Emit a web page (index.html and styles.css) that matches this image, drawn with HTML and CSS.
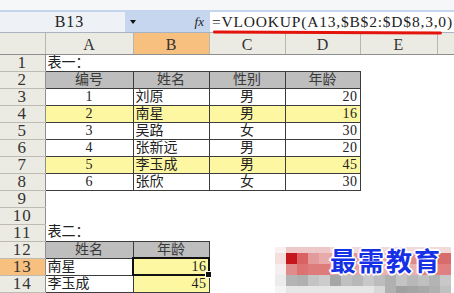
FILE: index.html
```html
<!doctype html>
<html lang="zh">
<head>
	<meta charset="utf-8">
	<title>VLOOKUP</title>
	<link rel="stylesheet" href="styles.css">
</head>
<body>

	<div class="top"></div>

	<div class="fbar">
		<div class="namebox">B13</div>
		<div class="fxarea"><span class="arrow"></span><span class="fx">fx</span></div>
		<div class="formula">=VLOOKUP(A13,$B$2:$D$8,3,0)</div>
	</div>

	<table class="sheet">
		<colgroup>
			<col class="w-rh"><col class="w-a"><col class="w-b"><col class="w-c"><col class="w-d"><col class="w-e"><col class="w-f">
		</colgroup>
		<thead>
			<tr><th></th><th>A</th><th class="sel">B</th><th>C</th><th>D</th><th>E</th><th></th></tr>
		</thead>
		<tbody>
			<tr><th>1</th><td>表一：</td><td></td><td></td><td></td><td></td><td></td></tr>
			<tr><th>2</th><td class="b hd c">编号</td><td class="b hd c">姓名</td><td class="b hd c">性别</td><td class="b hd c">年龄</td><td></td><td></td></tr>
			<tr><th>3</th><td class="b c">1</td><td class="b">刘原</td><td class="b c">男</td><td class="b r">20</td><td></td><td></td></tr>
			<tr><th>4</th><td class="b y c">2</td><td class="b y">南星</td><td class="b y c">男</td><td class="b y r">16</td><td></td><td></td></tr>
			<tr><th>5</th><td class="b c">3</td><td class="b">吴路</td><td class="b c">女</td><td class="b r">30</td><td></td><td></td></tr>
			<tr><th>6</th><td class="b c">4</td><td class="b">张新远</td><td class="b c">男</td><td class="b r">20</td><td></td><td></td></tr>
			<tr><th>7</th><td class="b y c">5</td><td class="b y">李玉成</td><td class="b y c">男</td><td class="b y r">45</td><td></td><td></td></tr>
			<tr><th>8</th><td class="b c">6</td><td class="b">张欣</td><td class="b c">女</td><td class="b r">30</td><td></td><td></td></tr>
			<tr><th>9</th><td></td><td></td><td></td><td></td><td></td><td></td></tr>
			<tr><th>10</th><td></td><td></td><td></td><td></td><td></td><td></td></tr>
			<tr><th>11</th><td>表二：</td><td></td><td></td><td></td><td></td><td></td></tr>
			<tr><th>12</th><td class="b hd c">姓名</td><td class="b hd c">年龄</td><td></td><td></td><td></td><td></td></tr>
			<tr><th class="sel">13</th><td class="b">南星</td><td class="b y r active">16</td><td></td><td></td><td></td><td></td></tr>
			<tr><th>14</th><td class="b">李玉成</td><td class="b y r">45</td><td></td><td></td><td></td><td></td></tr>
			<tr class="last"><th></th><td></td><td></td><td></td><td></td><td></td><td></td></tr>
		</tbody>
	</table>

	<!-- водяной знак: мозаика + надпись -->
	<div class="mark">
		<svg class="mosaic" width="176" height="46" viewBox="0 0 176 46">
			<rect x="0" y="0" width="176" height="6" fill="#f2dada"/>
			<rect x="0" y="0" width="11" height="6" fill="#faf0f0"/>
			<rect x="11" y="0" width="44" height="6" fill="#eec8c8"/>

			<rect x="0" y="6" width="11" height="11" fill="#f4dede"/>
			<rect x="11" y="6" width="11" height="11" fill="#c4161c"/>
			<rect x="22" y="6" width="11" height="11" fill="#da6262"/>
			<rect x="33" y="6" width="11" height="11" fill="#e39a9a"/>
			<rect x="44" y="6" width="11" height="11" fill="#e8aaaa"/>
			<rect x="55" y="6" width="11" height="11" fill="#e6a4a4"/>
			<rect x="66" y="6" width="33" height="11" fill="#e09494"/>
			<rect x="99" y="6" width="33" height="11" fill="#e6a6a6"/>
			<rect x="132" y="6" width="22" height="11" fill="#de8a8a"/>
			<rect x="154" y="6" width="22" height="11" fill="#d86c6c"/>

			<rect x="0" y="17" width="11" height="11" fill="#f7efef"/>
			<rect x="11" y="17" width="11" height="11" fill="#e08c8c"/>
			<rect x="22" y="17" width="11" height="11" fill="#dc7272"/>
			<rect x="33" y="17" width="22" height="11" fill="#de7c7c"/>
			<rect x="55" y="17" width="44" height="11" fill="#e4a2a2"/>
			<rect x="99" y="17" width="44" height="11" fill="#e9b2b2"/>
			<rect x="143" y="17" width="33" height="11" fill="#e08080"/>

			<rect x="0" y="28" width="11" height="11" fill="#ececec"/>
			<rect x="11" y="28" width="11" height="11" fill="#b4b4b4"/>
			<rect x="22" y="28" width="11" height="11" fill="#b0b0b0"/>
			<rect x="33" y="28" width="11" height="11" fill="#c4c4c4"/>
			<rect x="44" y="28" width="11" height="11" fill="#cccccc"/>
			<rect x="55" y="28" width="11" height="11" fill="#a6a6a6"/>
			<rect x="66" y="28" width="11" height="11" fill="#c0c0c0"/>
			<rect x="77" y="28" width="11" height="11" fill="#b8b8b8"/>
			<rect x="88" y="28" width="11" height="11" fill="#c8c8c8"/>
			<rect x="99" y="28" width="11" height="11" fill="#bcbcbc"/>
			<rect x="110" y="28" width="11" height="11" fill="#b0b0b0"/>
			<rect x="121" y="28" width="11" height="11" fill="#c4c4c4"/>
			<rect x="132" y="28" width="11" height="11" fill="#b8b8b8"/>
			<rect x="143" y="28" width="11" height="11" fill="#c0c0c0"/>
			<rect x="154" y="28" width="11" height="11" fill="#b4b4b4"/>
			<rect x="165" y="28" width="11" height="11" fill="#c8c8c8"/>

			<rect x="0" y="39" width="11" height="7" fill="#f4f4f4"/>
			<rect x="11" y="39" width="88" height="7" fill="#e6e6e6"/>
			<rect x="99" y="39" width="11" height="7" fill="#d8d8d8"/>
			<rect x="110" y="39" width="11" height="7" fill="#b0b0b0"/>
			<rect x="121" y="39" width="11" height="7" fill="#a0a0a0"/>
			<rect x="132" y="39" width="11" height="7" fill="#a4a4a4"/>
			<rect x="143" y="39" width="11" height="7" fill="#a8a8a8"/>
			<rect x="154" y="39" width="11" height="7" fill="#b0b0b0"/>
			<rect x="165" y="39" width="11" height="7" fill="#c0c0c0"/>
		</svg>
		<span class="mark-text">最需教育</span>
	</div>

</body>
</html>
```

FILE: styles.css
```css
* {
	box-sizing: border-box;
}

body {
	position: relative;
	width: 454px;
	height: 293px;
	margin: 0;
	overflow: hidden;
	color: #222;
	font: 15px/16px 'Liberation Serif', 'Noto Sans CJK SC', serif;
	background: #fff;
}

/* верхняя полоска панели */
.top {
	height: 12px;
	background: #f6f7f9;
	border-bottom: 2px solid #c5d5ee;
}

/* строка формул */
.fbar {
	display: flex;
	height: 21px;
	border-bottom: 1px solid #a9b2c2;
}

.namebox {
	flex-shrink: 0;
	width: 125px;
	padding-left: 14px;
	font-size: 16px;
	line-height: 20px;
	letter-spacing: 1px;
	text-align: center;
	background: #eef1f6;
}

.fxarea {
	display: flex;
	flex-shrink: 0;
	align-items: center;
	justify-content: space-between;
	width: 85px;
	padding: 0 6px 0 5px;
	background: #c6d6ee;
}

.arrow {
	width: 0;
	height: 0;
	border-top: 4px solid #111;
	border-right: 3px solid transparent;
	border-left: 3px solid transparent;
}

.fx {
	font: italic 13px 'Liberation Serif', serif;
}

.formula {
	position: relative;
	flex: 1;
	min-width: 0;
	padding-left: 2px;
	font-size: 15.5px;
	line-height: 19px;
	letter-spacing: .8px;
	white-space: nowrap;
	background: #fff;
}

.formula::after {
	content: '';
	position: absolute;
	left: 3px;
	bottom: -2px;
	width: 229px;
	height: 3px;
	background: #e3140c;
	border-radius: 2px;
	transform: rotate(0.3deg);
}/* красное подчеркивание поверх */

/* лист */
.sheet {
	width: 454px;
	border-collapse: collapse;
	table-layout: fixed;
}

.w-rh { width: 45px; }
.w-a { width: 88px; }
.w-b { width: 76px; }
.w-c { width: 76px; }
.w-d { width: 75px; }
.w-e { width: 77px; }
.w-f { width: 17px; }

.sheet thead th {
	height: 21px;
	padding: 3px 0 0;
	font-size: 16px;
	font-weight: normal;
	color: #333;
	background: #ecebe3;
	border-right: 1px solid #b8b6ad;
	border-bottom: 1px solid #8f8f8f;
}

.sheet tbody tr {
	height: 17px;
}

.sheet tbody th {
	padding: 0;
	font-size: 17px;
	font-weight: normal;
	line-height: 16px;
	letter-spacing: 1px;
	color: #333;
	background: #ecebe3;
	border-right: 1px solid #8f8f8f;
	border-bottom: 1px solid #bdbbb2;
}

.sheet .sel {
	background: #f8c07e;
}

.sheet td {
	padding: 0 2px;
	white-space: nowrap;
	overflow: visible;
	font-size: 14px;
}

.sheet .last th {
	border-bottom: 0;
}

.b {
	border: 1px solid #3c3c3c;
}

.hd {
	color: #3a3a3a;
	background: #bebebe;
}

.y {
	background: #fcf7a0;
}

.c { text-align: center; }
.r { text-align: right; letter-spacing: .5px; }

.active {
	position: relative;
	outline: 2px solid #111;
	outline-offset: -1px;
}

.active::after {
	content: '';
	position: absolute;
	right: -3px;
	bottom: -3px;
	width: 5px;
	height: 5px;
	background: #111;
	border: 1px solid #fff;
}/* маркер заполнения */

/* водяной знак */
.mark {
	position: absolute;
	left: 275px;
	top: 247px;
	width: 176px;
	height: 46px;
}

.mosaic {
	display: block;
}

.mark-text {
	position: absolute;
	left: 55px;
	top: -2px;
	font: 700 26px/30px 'Noto Sans CJK SC', sans-serif;
	letter-spacing: 2px;
	color: #1630e6;
	text-shadow: 2px 0 0 #fff, -2px 0 0 #fff, 0 2px 0 #fff, 0 -2px 0 #fff, 1px 1px 0 #fff, -1px -1px 0 #fff, 1px -1px 0 #fff, -1px 1px 0 #fff;
}
```
